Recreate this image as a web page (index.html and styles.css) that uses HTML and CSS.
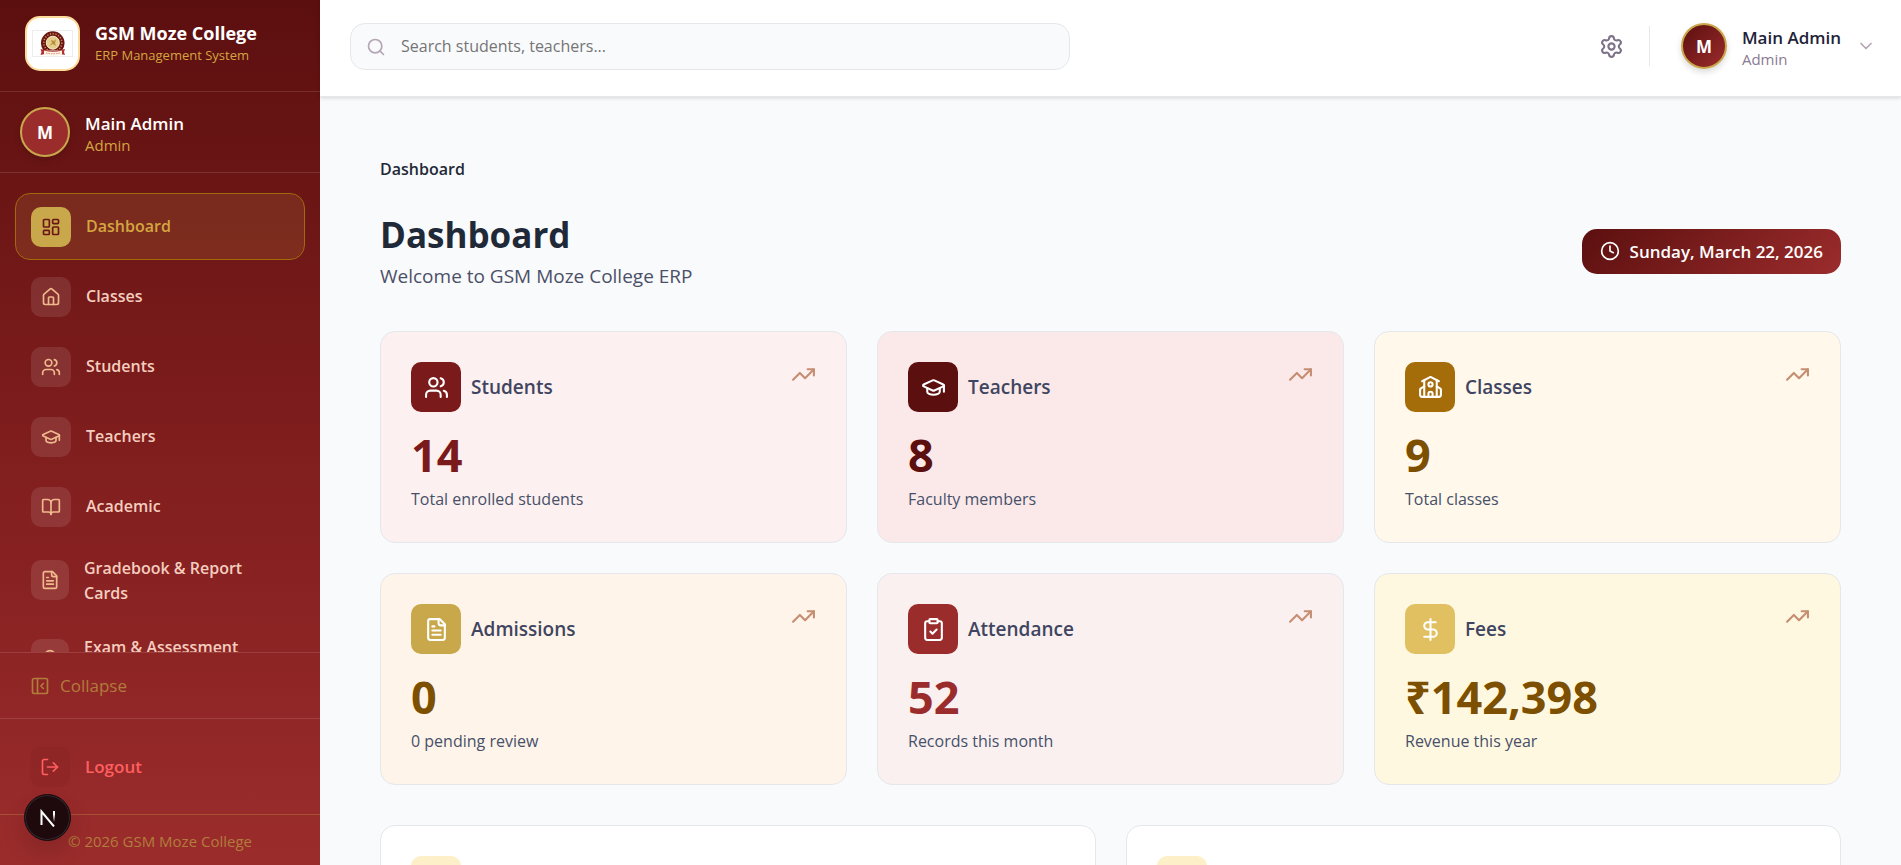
FILE: index.html
```html
<!DOCTYPE html>
<html lang="en">
  <head>
    <meta charset="UTF-8" />
    <meta name="viewport" content="width=device-width, initial-scale=1.0" />
    <title>GSM Moze College ERP</title>
    <link rel="stylesheet" href="styles.css">
  </head>
  <body>
    <svg class="sprite" aria-hidden="true">
      <symbol id="i-dashboard" viewBox="0 0 24 24"><rect x="3" y="3" width="7" height="9" rx="1"/><rect x="14" y="3" width="7" height="5" rx="1"/><rect x="14" y="12" width="7" height="9" rx="1"/><rect x="3" y="16" width="7" height="5" rx="1"/></symbol>
      <symbol id="i-house" viewBox="0 0 24 24"><path d="M15 21v-8a1 1 0 0 0-1-1h-4a1 1 0 0 0-1 1v8"/><path d="M3 10a2 2 0 0 1 .709-1.528l7-5.999a2 2 0 0 1 2.582 0l7 5.999A2 2 0 0 1 21 10v9a2 2 0 0 1-2 2H5a2 2 0 0 1-2-2z"/></symbol>
      <symbol id="i-users" viewBox="0 0 24 24"><path d="M16 21v-2a4 4 0 0 0-4-4H6a4 4 0 0 0-4 4v2"/><circle cx="9" cy="7" r="4"/><path d="M22 21v-2a4 4 0 0 0-3-3.87"/><path d="M16 3.128a4 4 0 0 1 0 7.744"/></symbol>
      <symbol id="i-cap" viewBox="0 0 24 24"><path d="M21.42 10.922a1 1 0 0 0-.019-1.838L12.83 5.18a2 2 0 0 0-1.66 0L2.6 9.08a1 1 0 0 0 0 1.832l8.57 3.908a2 2 0 0 0 1.66 0z"/><path d="M22 10v6"/><path d="M6 12.5V16a6 3 0 0 0 12 0v-3.5"/></symbol>
      <symbol id="i-book" viewBox="0 0 24 24"><path d="M12 7v14"/><path d="M3 18a1 1 0 0 1-1-1V4a1 1 0 0 1 1-1h5a4 4 0 0 1 4 4 4 4 0 0 1 4-4h5a1 1 0 0 1 1 1v13a1 1 0 0 1-1 1h-6a3 3 0 0 0-3 3 3 3 0 0 0-3-3z"/></symbol>
      <symbol id="i-file" viewBox="0 0 24 24"><path d="M15 2H6a2 2 0 0 0-2 2v16a2 2 0 0 0 2 2h12a2 2 0 0 0 2-2V7z"/><path d="M14 2v4a2 2 0 0 0 2 2h4"/><path d="M10 9H8"/><path d="M16 13H8"/><path d="M16 17H8"/></symbol>
      <symbol id="i-award" viewBox="0 0 24 24"><path d="m15.477 12.89 1.515 8.526a.5.5 0 0 1-.81.47l-3.58-2.687a1 1 0 0 0-1.197 0l-3.586 2.686a.5.5 0 0 1-.81-.469l1.514-8.526"/><circle cx="12" cy="8" r="6"/></symbol>
      <symbol id="i-panel" viewBox="0 0 24 24"><rect x="3" y="3" width="18" height="18" rx="2"/><path d="M9 3v18"/><path d="m16 15-3-3 3-3"/></symbol>
      <symbol id="i-logout" viewBox="0 0 24 24"><path d="m16 17 5-5-5-5"/><path d="M21 12H9"/><path d="M9 21H5a2 2 0 0 1-2-2V5a2 2 0 0 1 2-2h4"/></symbol>
      <symbol id="i-search" viewBox="0 0 24 24"><circle cx="11" cy="11" r="8"/><path d="m21 21-4.34-4.34"/></symbol>
      <symbol id="i-settings" viewBox="0 0 24 24"><path d="M9.671 4.136a2.34 2.34 0 0 1 4.659 0 2.34 2.34 0 0 0 3.319 1.915 2.34 2.34 0 0 1 2.33 4.033 2.34 2.34 0 0 0 0 3.831 2.34 2.34 0 0 1-2.33 4.033 2.34 2.34 0 0 0-3.319 1.915 2.34 2.34 0 0 1-4.659 0 2.34 2.34 0 0 0-3.32-1.915 2.34 2.34 0 0 1-2.33-4.033 2.34 2.34 0 0 0 0-3.831A2.34 2.34 0 0 1 6.35 6.051a2.34 2.34 0 0 0 3.319-1.915"/><circle cx="12" cy="12" r="3"/></symbol>
      <symbol id="i-chevron" viewBox="0 0 24 24"><path d="m6 9 6 6 6-6"/></symbol>
      <symbol id="i-clock" viewBox="0 0 24 24"><circle cx="12" cy="12" r="10"/><path d="M12 6v6l4 2"/></symbol>
      <symbol id="i-trend" viewBox="0 0 24 24"><path d="M16 7h6v6"/><path d="m22 7-8.5 8.5-5-5L2 17"/></symbol>
      <symbol id="i-school" viewBox="0 0 24 24"><path d="M14 21v-3a2 2 0 0 0-4 0v3"/><path d="M18 5v16"/><path d="m4 6 7.106-3.79a2 2 0 0 1 1.788 0L20 6"/><path d="m6 11-3.52 2.147a1 1 0 0 0-.48.854V19a2 2 0 0 0 2 2h16a2 2 0 0 0 2-2v-5a1 1 0 0 0-.48-.853L18 11"/><path d="M6 5v16"/><circle cx="12" cy="9" r="2"/></symbol>
      <symbol id="i-clipboard" viewBox="0 0 24 24"><rect x="8" y="2" width="8" height="4" rx="1"/><path d="M16 4h2a2 2 0 0 1 2 2v14a2 2 0 0 1-2 2H6a2 2 0 0 1-2-2V6a2 2 0 0 1 2-2h2"/><path d="m9 14 2 2 4-4"/></symbol>
      <symbol id="i-dollar" viewBox="0 0 24 24"><path d="M12 2v20"/><path d="M17 5H9.5a3.5 3.5 0 0 0 0 7h5a3.5 3.5 0 0 1 0 7H6"/></symbol>
    </svg>

    <div class="app">
      <aside class="sidebar">
        <div class="brand">
          <div class="brand-logo">
            <svg width="41" height="27" viewBox="0 0 41 27">
              <rect x="0.5" y="0.5" width="40" height="26" fill="#fff" stroke="#ededed"/>
              <path d="M11.5 20.500A11.800 11.800 0 1 1 30 20.500z" fill="#6b1515"/>
              <circle cx="20.800" cy="12.700" r="9" fill="none" stroke="#c9964f" stroke-width="1.500" stroke-dasharray="1.200 1.600"/>
              <circle cx="20.800" cy="12.700" r="6.500" fill="#e6cf8c" stroke="#fbf0cf" stroke-width="1"/>
              <path d="M17 16l3-3-1-3 3 1 2-2-1 4 1 3-3-2z" fill="#b98f3a"/>
              <path d="M8.500 19l4.500 1q7.500 2 15.500 0l4.500-1-1 3 1 3-4.500-1q-7.500 2-15.500 0l-4.500 1 1-3z" fill="#b4302c"/>
              <path d="M12 20.500q9 2.500 18 0v4q-9 2.500-18 0z" fill="#fdf3e6"/>
              <path d="M14 23q7 1.500 14 0" fill="none" stroke="#d9896a" stroke-width="1" stroke-dasharray="1.500 1"/>
            </svg>
          </div>
          <div>
            <div class="brand-name">GSM Moze College</div>
            <div class="brand-sub">ERP Management System</div>
          </div>
        </div>

        <div class="account">
          <div class="avatar">M</div>
          <div>
            <div class="account-name">Main Admin</div>
            <div class="account-role">Admin</div>
          </div>
        </div>

        <nav class="nav">
          <a class="nav-item active" href="#dashboard"><span class="nav-icon"><svg class="icon"><use href="#i-dashboard"/></svg></span>Dashboard</a>
          <a class="nav-item" href="#classes"><span class="nav-icon"><svg class="icon"><use href="#i-house"/></svg></span>Classes</a>
          <a class="nav-item" href="#students"><span class="nav-icon"><svg class="icon"><use href="#i-users"/></svg></span>Students</a>
          <a class="nav-item" href="#teachers"><span class="nav-icon"><svg class="icon"><use href="#i-cap"/></svg></span>Teachers</a>
          <a class="nav-item" href="#academic"><span class="nav-icon"><svg class="icon"><use href="#i-book"/></svg></span>Academic</a>
          <a class="nav-item long" href="#gradebook"><span class="nav-icon"><svg class="icon"><use href="#i-file"/></svg></span>Gradebook &amp; Report Cards</a>
          <a class="nav-item long" href="#exams"><span class="nav-icon"><svg class="icon"><use href="#i-award"/></svg></span>Exam &amp; Assessment</a>
        </nav>

        <div class="collapse">
          <button class="collapse-btn" type="button"><svg class="icon"><use href="#i-panel"/></svg>Collapse</button>
        </div>
        <div class="logout">
          <button class="logout-btn" type="button"><span class="logout-icon"><svg class="icon"><use href="#i-logout"/></svg></span>Logout</button>
        </div>
        <div class="copyright">© 2026 GSM Moze College</div>
      </aside>

      <div class="content">
        <header class="topbar">
          <label class="search">
            <svg class="icon"><use href="#i-search"/></svg>
            <input type="text" placeholder="Search students, teachers..." aria-label="Search" />
          </label>
          <div class="topbar-right">
            <button class="settings" type="button" aria-label="Settings"><svg class="icon"><use href="#i-settings"/></svg></button>
            <button class="profile" type="button">
              <span class="avatar small">M</span>
              <span class="profile-text">
                <span class="profile-name">Main Admin</span>
                <span class="profile-role">Admin</span>
              </span>
              <svg class="icon"><use href="#i-chevron"/></svg>
            </button>
          </div>
        </header>

        <main class="main">
          <div class="breadcrumb">Dashboard</div>
          <div class="page-head">
            <div>
              <h1>Dashboard</h1>
              <p>Welcome to GSM Moze College ERP</p>
            </div>
            <div class="date"><svg class="icon"><use href="#i-clock"/></svg>Sunday, March 22, 2026</div>
          </div>

          <section class="stats">
            <div class="card students">
              <div class="card-head">
                <span class="card-icon"><svg class="icon"><use href="#i-users"/></svg></span>
                <h2>Students</h2>
                <svg class="icon trend"><use href="#i-trend"/></svg>
              </div>
              <div class="value">14</div>
              <div class="note">Total enrolled students</div>
            </div>
            <div class="card teachers">
              <div class="card-head">
                <span class="card-icon"><svg class="icon"><use href="#i-cap"/></svg></span>
                <h2>Teachers</h2>
                <svg class="icon trend"><use href="#i-trend"/></svg>
              </div>
              <div class="value">8</div>
              <div class="note">Faculty members</div>
            </div>
            <div class="card classes">
              <div class="card-head">
                <span class="card-icon"><svg class="icon"><use href="#i-school"/></svg></span>
                <h2>Classes</h2>
                <svg class="icon trend"><use href="#i-trend"/></svg>
              </div>
              <div class="value">9</div>
              <div class="note">Total classes</div>
            </div>
            <div class="card admissions">
              <div class="card-head">
                <span class="card-icon"><svg class="icon"><use href="#i-file"/></svg></span>
                <h2>Admissions</h2>
                <svg class="icon trend"><use href="#i-trend"/></svg>
              </div>
              <div class="value">0</div>
              <div class="note">0 pending review</div>
            </div>
            <div class="card attendance">
              <div class="card-head">
                <span class="card-icon"><svg class="icon"><use href="#i-clipboard"/></svg></span>
                <h2>Attendance</h2>
                <svg class="icon trend"><use href="#i-trend"/></svg>
              </div>
              <div class="value">52</div>
              <div class="note">Records this month</div>
            </div>
            <div class="card fees">
              <div class="card-head">
                <span class="card-icon"><svg class="icon"><use href="#i-dollar"/></svg></span>
                <h2>Fees</h2>
                <svg class="icon trend"><use href="#i-trend"/></svg>
              </div>
              <div class="value">₹142,398</div>
              <div class="note">Revenue this year</div>
            </div>
          </section>

          <section class="panels">
            <div class="panel"><span class="panel-icon"></span></div>
            <div class="panel"><span class="panel-icon"></span></div>
          </section>
        </main>
      </div>
    </div>

    <button class="dev-badge" type="button" aria-label="N">
      <svg width="18" height="18" viewBox="0 0 18 18" fill="none" stroke-width="2">
        <defs>
          <linearGradient id="fade" x1="0" y1="0" x2="0" y2="1"><stop offset="0.3" stop-color="#fff"/><stop offset="1" stop-color="#fff" stop-opacity="0"/></linearGradient>
        </defs>
        <path d="M2.500 16V2.500L15 17.500" stroke="#fff"/>
        <rect x="14" y="2" width="2" height="11" fill="url(#fade)"/>
      </svg>
    </button>
  </body>
</html>
```

FILE: styles.css
```css
* {
  box-sizing: border-box;
}

body {
  margin: 0;
  height: 100vh;
  overflow: hidden;
  background: #f9fafc;
  color: #1f2937;
  font-family: "Segoe UI", "Open Sans", "Noto Sans", sans-serif;
  font-size: 17px;
  line-height: 25px;
}

h1,
h2,
p {
  margin: 0;
}

button {
  padding: 0;
  border: none;
  background: none;
  font: inherit;
  cursor: pointer;
}

.sprite {
  position: absolute;
  width: 0;
  height: 0;
}

.icon {
  width: 20px;
  height: 20px;
  flex-shrink: 0;
  fill: none;
  stroke: currentColor;
  stroke-width: 2;
  stroke-linecap: round;
  stroke-linejoin: round;
}

.app {
  display: flex;
  height: 100%;
}

/* sidebar */
.sidebar {
  width: 320px;
  flex-shrink: 0;
  display: flex;
  flex-direction: column;
  background: linear-gradient(180deg, #5c0f0f 0%, #7f1d1d 50%, #9b2c2c 100%);
}

.brand {
  display: flex;
  gap: 15px;
  height: 92px;
  padding: 16px 25px 0;
  border-bottom: 1px solid rgba(255, 255, 255, 0.12);
}

.brand-logo {
  width: 55px;
  height: 55px;
  display: flex;
  align-items: center;
  justify-content: center;
  border: 2px solid #fbdc9c;
  border-radius: 15px;
  background: #fff;
}

.brand-name {
  margin-top: 5px;
  color: #fff;
  font-size: 18px;
  font-weight: 700;
  line-height: 25px;
}

.brand-sub {
  color: #d4a641;
  font-size: 13px;
  line-height: 18px;
}

.account {
  display: flex;
  align-items: center;
  gap: 15px;
  height: 81px;
  padding: 0 20px;
  border-bottom: 1px solid rgba(255, 255, 255, 0.12);
}

.avatar {
  width: 50px;
  height: 50px;
  display: flex;
  align-items: center;
  justify-content: center;
  border: 2px solid #c9a84c;
  border-radius: 50%;
  background: #9b2c2c;
  color: #fff;
  font-weight: 700;
  box-shadow: 0 3px 6px rgba(0, 0, 0, 0.15);
}

.account-name {
  color: #fff;
  font-weight: 600;
  line-height: 25px;
}

.account-role {
  color: #d4a641;
  font-size: 15px;
  line-height: 18px;
}

.nav {
  flex: 1;
  min-height: 0;
  overflow: hidden;
  display: flex;
  flex-direction: column;
  gap: 3px;
  padding: 20px 15px 0;
}

.nav-item {
  display: flex;
  flex-shrink: 0;
  align-items: center;
  gap: 15px;
  min-height: 67px;
  padding: 12px 15px;
  border: 1px solid transparent;
  border-radius: 15px;
  color: #f5cdbf;
  font-weight: 600;
  font-size: 16px;
  text-decoration: none;
}

.nav-icon {
  width: 40px;
  height: 40px;
  flex-shrink: 0;
  display: flex;
  align-items: center;
  justify-content: center;
  border-radius: 10px;
  background: rgba(255, 255, 255, 0.1);
  color: #efb98c;
}

/* room for a two-line label */
.nav-item.long {
  align-items: flex-start;
  min-height: 76px;
}

.nav-item.long .nav-icon {
  width: 38px;
  margin-top: 4px;
}

.nav-item.active {
  border-color: #a16a0c;
  background: rgba(201, 168, 76, 0.15);
  color: #d4a641;
}

.nav-item.active .nav-icon {
  background: #c9a84c;
  color: #6b1515;
}

.collapse,
.logout {
  display: flex;
  align-items: center;
  height: 66px;
  padding: 0 30px;
  border-top: 1px solid rgba(255, 255, 255, 0.12);
}

.collapse-btn,
.logout-btn {
  display: flex;
  align-items: center;
  gap: 10px;
  color: #b27c3c;
}

.logout {
  height: 96px;
}

.logout-btn {
  gap: 15px;
  color: #ff5f60;
  font-weight: 600;
}

.logout-icon {
  width: 40px;
  height: 40px;
  display: flex;
  align-items: center;
  justify-content: center;
  border-radius: 10px;
  background: rgba(127, 29, 29, 0.2);
}

.copyright {
  height: 51px;
  border-top: 1px solid rgba(201, 168, 76, 0.3);
  color: #b27c3c;
  font-size: 15px;
  line-height: 52px;
  text-align: center;
}

/* top bar */
.content {
  flex: 1;
  min-width: 0;
}

.topbar {
  position: relative;
  display: flex;
  align-items: flex-start;
  justify-content: space-between;
  height: 97px;
  padding: 23px 25px 0 30px;
  background: #fff;
  border-bottom: 1px solid #e5e7eb;
  box-shadow: 0 1px 4px rgba(0, 0, 0, 0.15);
}

.search {
  display: flex;
  align-items: center;
  gap: 15px;
  width: 720px;
  height: 47px;
  padding: 0 15px;
  border: 1px solid #e5e7eb;
  border-radius: 15px;
  background: #f9fafc;
  color: #b5a5b5;
}

.search input {
  flex: 1;
  border: none;
  outline: none;
  padding: 0;
  background: none;
  font: inherit;
  font-size: 16px;
}

.search input::placeholder {
  color: #757575;
}

.topbar-right {
  display: flex;
  align-items: center;
}

.settings {
  height: 40px;
  padding-right: 25px;
  border-right: 1px solid #e8e8ec;
  color: #7d7088;
}

.settings .icon {
  display: block;
  width: 25px;
  height: 25px;
}

.profile {
  display: flex;
  align-items: center;
  gap: 15px;
  padding-left: 31px;
  text-align: left;
}

.avatar.small {
  width: 46px;
  height: 46px;
  background: linear-gradient(135deg, #5c0f0f, #9b2c2c);
}

.profile-text {
  display: flex;
  flex-direction: column;
}

.profile-name {
  color: #1e2338;
  font-weight: 600;
  line-height: 25px;
}

.profile-role {
  color: #8b7b92;
  font-size: 15px;
  line-height: 18px;
}

.profile .icon {
  color: #b5a5b5;
}

/* page */
.main {
  padding: 60px 60px 0;
}

.breadcrumb {
  font-weight: 600;
  font-size: 16px;
}

.page-head {
  display: flex;
  align-items: center;
  justify-content: space-between;
  height: 90px;
  margin: 24px 0 35px;
}

.page-head h1 {
  color: #1f2937;
  font-size: 35px;
  font-weight: 700;
  line-height: 50px;
}

.page-head p {
  color: #4b4f68;
  font-size: 19px;
  line-height: 32px;
}

.date {
  display: flex;
  align-items: center;
  gap: 10px;
  height: 45px;
  padding: 0 18px;
  border-radius: 15px;
  background: linear-gradient(135deg, #5c0f0f, #9b2c2c);
  color: #fff;
  font-weight: 600;
}

.stats {
  display: grid;
  grid-template-columns: repeat(3, 1fr);
  gap: 30px;
}

.card {
  padding: 30px;
  border: 1px solid #e5e7eb;
  border-radius: 15px;
}

.card-head {
  display: flex;
  align-items: center;
  gap: 10px;
}

.card-icon {
  width: 50px;
  height: 50px;
  display: flex;
  align-items: center;
  justify-content: center;
  border-radius: 10px;
  color: #fff;
}

.card-head .icon {
  width: 25px;
  height: 25px;
}

.card h2 {
  color: #3f4560;
  font-size: 19px;
  font-weight: 600;
}

.card .trend {
  align-self: flex-start;
  margin-left: auto;
  color: #c58d71;
}

.value {
  margin: 15px 0 5px;
  font-size: 45px;
  font-weight: 700;
  line-height: 55px;
}

.note {
  color: #475069;
  font-size: 16px;
}

.students {
  background: #fdf0f0;
}

.students .card-icon {
  background: #7b1a1a;
}

.students .value {
  color: #7b1a1a;
}

.teachers {
  background: #fbe9e9;
}

.teachers .card-icon {
  background: #5c0f0f;
}

.teachers .value {
  color: #5c0f0f;
}

.classes {
  background: #fff8eb;
}

.classes .card-icon {
  background: #a56c0a;
}

.classes .value,
.admissions .value,
.fees .value {
  color: #7d4f00;
}

.admissions {
  background: #fff4e9;
}

.admissions .card-icon {
  background: #c9a84c;
}

.attendance {
  background: #faf0f0;
}

.attendance .card-icon {
  background: #9b2c2c;
}

.attendance .value {
  color: #9b2c2c;
}

.fees {
  background: #fff8e1;
}

.fees .card-icon {
  background: #e0c060;
}

.panels {
  display: grid;
  grid-template-columns: 1fr 1fr;
  gap: 30px;
  margin-top: 40px;
}

.panel {
  height: 400px;
  padding: 30px;
  border: 1px solid #e5e7eb;
  border-radius: 15px;
  background: #fff;
}

.panel-icon {
  display: block;
  width: 50px;
  height: 50px;
  border-radius: 10px;
  background: #fdf0c8;
}

/* floats over the sidebar footer */
.dev-badge {
  position: fixed;
  left: 24px;
  bottom: 24px;
  width: 47px;
  height: 47px;
  display: flex;
  align-items: center;
  justify-content: center;
  border: 1px solid #1b0a0c;
  border-radius: 50%;
  background: #1e0a0c;
  box-shadow: inset 0 0 0 1px #2f2a35, 0 12px 24px rgba(0, 0, 0, 0.12);
}
```
